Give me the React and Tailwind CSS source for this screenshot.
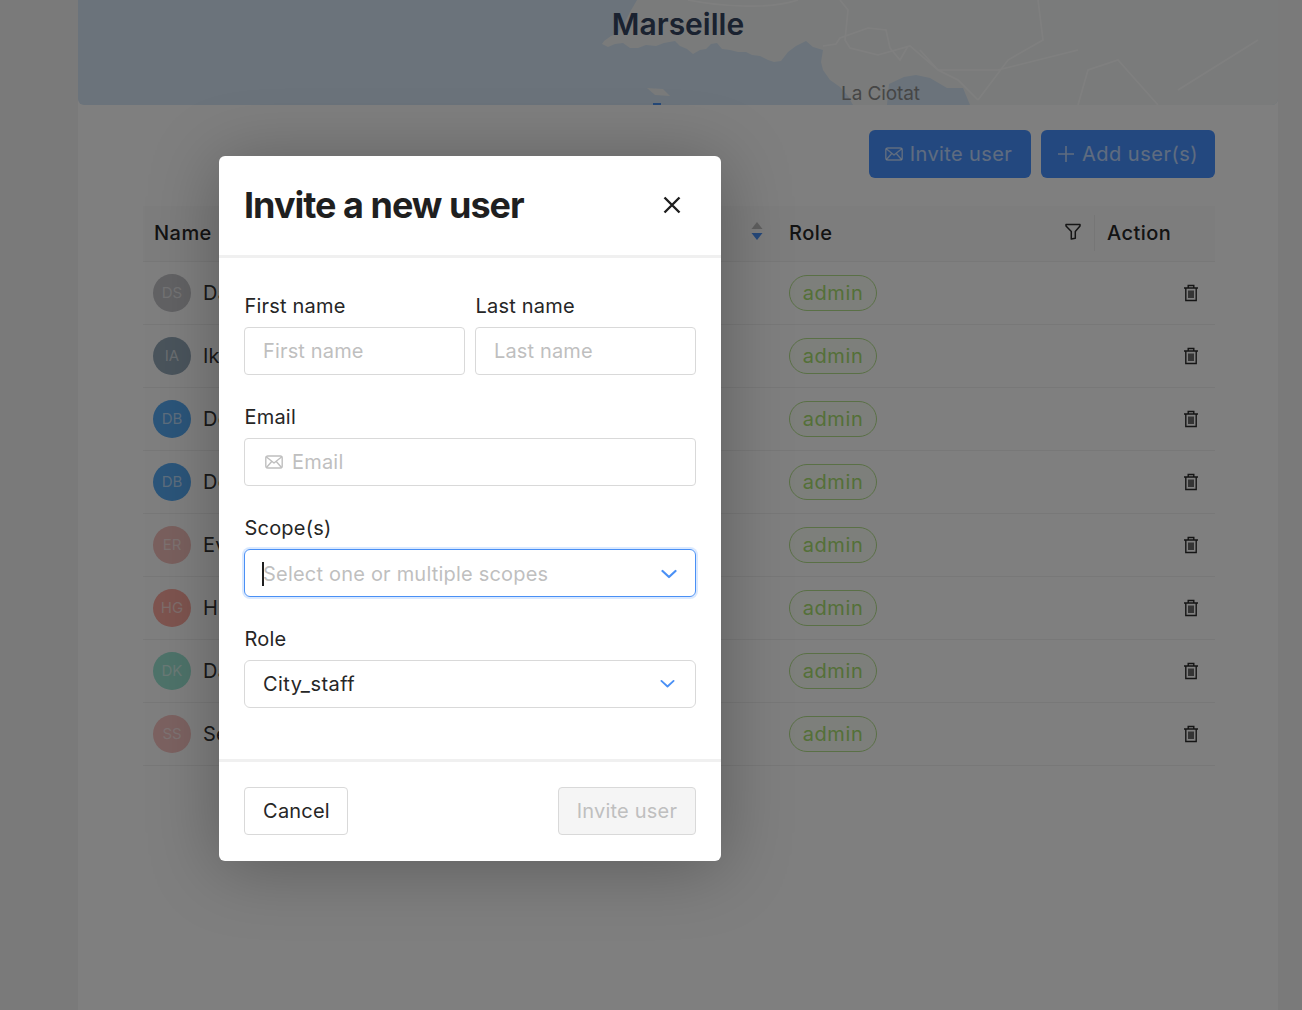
const F = { fontFamily: "Inter, 'Liberation Sans', sans-serif" };

function Mail({ className }) {
  return (
    <svg viewBox="0 0 18 14" className={className} fill="none" stroke="currentColor" strokeWidth="1.4" strokeLinejoin="round" strokeLinecap="round">
      <rect x="0.8" y="1" width="16.4" height="12" rx="2" />
      <path d="M1.5 2l7.5 6 7.5-6M1.5 12.5l5-5.8M16.5 12.5l-5-5.8" />
    </svg>
  );
}
function Trash() {
  return (
    <svg viewBox="0 0 16 18" className="w-[16px] h-[18px] text-[#2b2b2b]" fill="none" stroke="currentColor" strokeWidth="1.4">
      <path d="M1 4h14M5.2 4V1.5h5.6V4M2.8 4v12.5h10.4V4M6 6.5v7.5M8 6.5v7.5M10 6.5v7.5" />
    </svg>
  );
}
function Chevron({ w, sw }) {
  return (
    <svg viewBox="0 0 16 10" style={{ width: w }} className="text-[#4a90f5]" fill="none" stroke="currentColor" strokeWidth={sw} strokeLinecap="round" strokeLinejoin="round">
      <path d="M1.5 2l6.5 6 6.5-6" />
    </svg>
  );
}

function MapBg() {
  return (
    <svg viewBox="0 0 1200 105" className="w-full h-full block" preserveAspectRatio="none">
      <rect width="1200" height="105" fill="#d6e6f6" />
      <path fill="#f4f7f6" d="M559 0L552 12 546 24 540 33 533 36 526 41 524 44 530 47 537 44 545 43 552 48 560 48 568 45 578 46 586 43 597 41 602 46 609 49 615 54 622 50 628 49 633 44 639 43 644 49 652 50 660 52 668 52 674 55 682 56 690 60 696 62 703 61 710 52 718 46 728 41 735 47 745 50 743 62 745 70 752 80 762 87 770 96 775 105H809L811 84 826 77 838 75 852 78 869 88 885 88 892 105H1200V0Z" />
      <path fill="none" stroke="#ffffff" strokeWidth="1.6" d="M720 0C690 10 640 6 610 0M745 46L758 44 762 38 790 28 808 30 812 48 822 60 830 46M762 0L770 10 767 40 772 48 800 55 832 46 860 70 920 70 1000 50M842 50L860 70 880 80 900 100M960 0L965 40 930 60 900 100M1000 105L1010 70 1040 60 1080 105M1180 40L1100 90" />
      <path fill="#f4f7f6" d="M569 88L585 89 592 96 577 95Z" />
      <path fill="#4a90f0" d="M575 103h8v2h-8z" />
    </svg>
  );
}

const rows = [
  ["DS", "#c4c4c8", "Damien S."],
  ["IA", "#94a8b8", "Ikram A."],
  ["DB", "#56aaf4", "Denis B."],
  ["DB", "#56aaf4", "Denis B."],
  ["ER", "#f4c0bc", "Eva R."],
  ["HG", "#fca89e", "Hugo G."],
  ["DK", "#9ce6d4", "Dan K."],
  ["SS", "#f8c4c2", "Serge S."],
];

function Field({ label, grow, children }) {
  return (
    <div className={grow ? "flex flex-col min-w-0 flex-1" : "flex flex-col min-w-0"}>
      <label className="pl-[0.5px] text-[20px] leading-[24px] mb-[9px] text-[#262626]">{label}</label>
      {children}
    </div>
  );
}
const inputCls = "w-full h-[48px] rounded-[4px] border border-[#d9d9d9] bg-white px-[18px] text-[20px] tracking-[0.15px] outline-none placeholder:text-[#bfbfbf]";

export default function App() {
  return (
    <div style={F} className="relative w-[1302px] h-[1010px] overflow-hidden bg-[#f4f4f4] tracking-[0.2px]">
      <main className="ml-[78px] w-[1200px] h-full bg-white">
        <div className="relative h-[105px] rounded-b-[6px] overflow-hidden">
          <MapBg />
          <div className="absolute inset-x-0 top-[3px] text-center text-[30px] leading-[42px] font-semibold text-[#344460] tracking-normal">Marseille</div>
          <div className="absolute left-[763px] top-[82px] text-[19px] leading-[24px] tracking-[-0.1px] text-[#8c8c8c]">La Ciotat</div>
        </div>

        <div className="flex justify-end gap-[10px] pt-[25px] pr-[63px]">
          <button className="h-[48px] w-[162px] flex items-center justify-center gap-[7px] pr-[3px] rounded-[6px] bg-[#4690fe] text-white/65 text-[20px] tracking-[0.4px]">
            <Mail className="w-[18px] h-[14px]" />Invite user
          </button>
          <button className="h-[48px] w-[174px] flex items-center justify-center gap-[7px] pr-[1px] rounded-[6px] bg-[#4690fe] text-white/65 text-[20px] tracking-[0.5px]">
            <svg viewBox="0 0 18 18" className="w-[18px] h-[18px]" fill="none" stroke="currentColor" strokeWidth="1.6"><path d="M9 1v16M1 9h16" /></svg>
            Add user(s)
          </button>
        </div>

        <div className="ml-[65px] mt-[28px] w-[1072px]">
          <div className="grid grid-cols-[636px_315px_121px] h-[56px] pb-[2px] items-center bg-[#fafafa] border-b border-[#f0f0f0] text-[20px] text-[#262626] font-medium tracking-[0.45px]">
            <div className="relative pl-[11px]">
              Name
              <svg viewBox="0 0 12 20" className="absolute right-[16px] top-[3px] w-[12px] h-[20px]">
                <path d="M6 1l5.5 7H.5z" fill="#bfbfbf" />
                <path d="M6 19l5.5-7H.5z" fill="#4a90f5" />
              </svg>
            </div>
            <div className="relative pl-[10px]">
              Role
              <svg viewBox="0 0 16 17" className="absolute right-[13px] top-[5px] w-[16px] h-[17px] text-[#2b2b2b]" fill="none" stroke="currentColor" strokeWidth="1.5" strokeLinejoin="round">
                <path d="M1 1.5h14v1.5l-4.7 5.5v6.8l-4 .7v-7.5L1 3z" />
              </svg>
            </div>
            <div className="pl-[12px] border-l border-[#ececec] h-[36px] leading-[36px]">Action</div>
          </div>
          {rows.map((r, i) => (
            <div key={i} className="grid grid-cols-[636px_315px_121px] h-[63px] items-center border-b border-[#f0f0f0]">
              <div className="flex items-center gap-[12px] pl-[10px]">
                <span className="w-[38px] h-[38px] rounded-full flex items-center justify-center text-[15px] text-white/60 tracking-normal" style={{ background: r[1] }}>{r[0]}</span>
                <span className="text-[20px] text-[#333]">{r[2]}</span>
              </div>
              <div className="pl-[10px]">
                <span className="inline-flex items-center justify-center w-[88px] h-[36px] rounded-full border border-[#b4e08c] bg-[#fbfff6] text-[20px] text-[#a8e070] tracking-[0.6px]">admin</span>
              </div>
              <div className="flex justify-end pr-[16px]"><Trash /></div>
            </div>
          ))}
        </div>
      </main>

      <div className="absolute inset-0 bg-black/50" />

      <div role="dialog" className="absolute left-[219px] top-[156px] w-[502px] h-[705px] flex flex-col rounded-[6px] bg-white text-[#262626] shadow-[0_6px_70px_rgba(0,0,0,0.28)]">
        <header className="h-[102px] shrink-0 flex items-center justify-between pl-[25px] pr-[40px] pb-[2px] border-b-[3px] border-[#f0f0f0]">
          <h1 className="text-[36px] leading-[44px] font-bold tracking-[-1px] text-[#1f1f1f]">Invite a new user</h1>
          <svg viewBox="0 0 18 18" className="w-[18px] h-[18px] text-[#1f1f1f]" fill="none" stroke="currentColor" strokeWidth="2.4"><path d="M1.5 1.5l15 15M16.5 1.5l-15 15" /></svg>
        </header>

        <div className="flex-1 flex flex-col gap-[30px] px-[25px] pt-[36px]">
          <div className="flex gap-[10px]">
            <Field grow label="First name"><input className={inputCls} placeholder="First name" /></Field>
            <Field grow label="Last name"><input className={inputCls} placeholder="Last name" /></Field>
          </div>
          <Field label="Email">
            <div className="h-[48px] flex items-center gap-[9px] pl-[20px] rounded-[4px] border border-[#d9d9d9] text-[20px] text-[#bfbfbf]">
              <Mail className="w-[18px] h-[14px]" />Email
            </div>
          </Field>
          <Field label="Scope(s)">
            <div className="relative h-[48px] pt-[1px] flex items-center justify-between pl-[18px] pr-[18px] rounded-[6px] border border-[#4a90f5] shadow-[0_0_0_2px_rgba(70,144,254,0.2)] text-[20px] text-[#bfbfbf]">
              <span>Select one or multiple scopes</span>
              <span className="absolute left-[17px] top-[12px] w-[2px] h-[24px] bg-[#1f1f1f]" />
              <Chevron w="16px" sw="2.2" />
            </div>
          </Field>
          <Field label="Role">
            <div className="h-[48px] flex items-center justify-between pl-[18px] pr-[20px] rounded-[6px] border border-[#d9d9d9] text-[20px] text-[#262626]">
              <span className="tracking-[0.45px]">City_staff</span>
              <Chevron w="15px" sw="2" />
            </div>
          </Field>
        </div>

        <footer className="h-[102px] shrink-0 flex items-center justify-between px-[25px] pb-[2px] border-t-[3px] border-[#f0f0f0]">
          <button className="w-[104px] h-[48px] pl-[1px] rounded-[4px] border border-[#d9d9d9] bg-white text-[20px] text-[#262626]">Cancel</button>
          <button disabled className="w-[138px] h-[48px] rounded-[4px] border border-[#d9d9d9] bg-[#f5f5f5] text-[20px] text-[#bfbfbf]">Invite user</button>
        </footer>
      </div>
    </div>
  );
}
